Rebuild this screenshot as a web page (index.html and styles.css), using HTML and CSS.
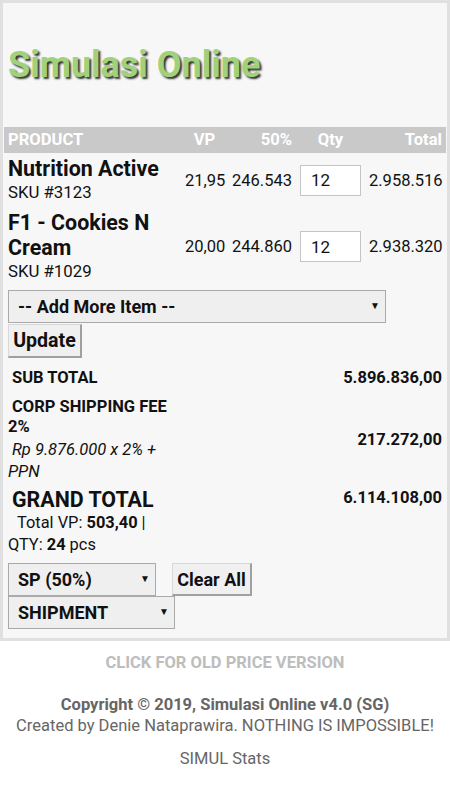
FILE: index.html
```html
<!DOCTYPE html>
<html>
<head>
<meta charset="utf-8">
<link rel="stylesheet" href="styles.css">
</head>
<body>
<div class="panel">
  <div class="head"><h1 class="title">Simulasi Online</h1></div>
  <table class="items">
    <colgroup><col class="c-prod"><col class="c-vp"><col class="c-disc"><col class="c-qty"><col class="c-total"></colgroup>
    <thead>
      <tr><th class="l">PRODUCT</th><th class="c">VP</th><th class="r">50%</th><th class="c">Qty</th><th class="r">Total</th></tr>
    </thead>
    <tbody>
      <tr>
        <td class="prod"><div class="pname">Nutrition Active</div><div class="sku">SKU #3123</div></td>
        <td class="num">21,95</td><td class="num">246.543</td>
        <td class="qty"><input class="qin" type="text" value="12"></td>
        <td class="num">2.958.516</td>
      </tr>
      <tr>
        <td class="prod"><div class="pname">F1 - Cookies N Cream</div><div class="sku">SKU #1029</div></td>
        <td class="num">20,00</td><td class="num">244.860</td>
        <td class="qty"><input class="qin" type="text" value="12"></td>
        <td class="num">2.938.320</td>
      </tr>
    </tbody>
  </table>
  <div class="controls">
    <span class="sel sel-add"><select><option>-- Add More Item --</option></select></span>
    <button class="btn btn-update">Update</button>
  </div>
  <table class="totals">
    <colgroup><col class="t-label"><col></colgroup>
    <tr>
      <td class="lbl"><div class="b ind">SUB TOTAL</div></td>
      <td class="val">5.896.836,00</td>
    </tr>
    <tr>
      <td class="lbl"><div class="b ind lh20">CORP SHIPPING FEE 2%</div><div class="it ind">Rp 9.876.000 x 2% + PPN</div></td>
      <td class="val mid">217.272,00</td>
    </tr>
    <tr>
      <td class="lbl gt"><div class="grand ind">GRAND TOTAL</div><div class="sum">Total VP: <b>503,40</b> |</div><div class="sum2">QTY: <b>24</b> pcs</div></td>
      <td class="val top">6.114.108,00</td>
    </tr>
  </table>
  <div class="bottom">
    <div class="brow">
      <span class="sel sel-sp"><select><option>SP (50%)</option></select></span>
      <button class="btn">Clear All</button>
    </div>
    <span class="sel sel-ship"><select><option>SHIPMENT</option></select></span>
  </div>
</div>
<div class="footer">
  <div class="old">CLICK FOR OLD PRICE VERSION</div>
  <div class="copy">Copyright © 2019, Simulasi Online v4.0 (SG)</div>
  <div class="created">Created by Denie Nataprawira. NOTHING IS IMPOSSIBLE!</div>
  <div class="stats">SIMUL Stats</div>
</div>
</body>
</html>
```
FILE: styles.css
```css
* { box-sizing: border-box; }
html, body { margin: 0; padding: 0; background: #fff; }
body { font-family: Roboto, "Liberation Sans", sans-serif; color: #111; width: 450px; }

.panel {
  border: 3px solid #e0e0e0;
  background: #f7f7f7;
  padding-bottom: 9px;
}
.head { height: 124px; padding: 42px 5px 0; }
.title {
  margin: 0;
  font-size: 36px;
  line-height: 40px;
  font-weight: 700;
  color: #a0d27c;
  text-shadow: 2px 2px 2px rgba(30,30,30,0.9);
}

.items {
  width: 442px;
  margin: 0 1px;
  border-collapse: collapse;
  table-layout: fixed;
}
.c-prod { width: 177px; }
.c-vp { width: 47px; }
.c-disc { width: 68px; }
.c-qty { width: 69px; }
.c-total { width: 81px; }
.items th {
  background: #c9c9c9;
  color: #fff;
  font-size: 16.6px;
  font-weight: 700;
  line-height: 18px;
  padding: 4px 4px 4px;
  height: 26px;
}
.l { text-align: left; }
.c { text-align: center; }
.r { text-align: right; }
.items td { padding: 3px 4px; vertical-align: middle; }
.pname { font-size: 21.4px; font-weight: 700; line-height: 25px; }
.sku { font-size: 16.8px; line-height: 23px; }
.num { text-align: right; font-size: 16.5px; white-space: nowrap; }
.qty { text-align: left; }
.qin {
  width: 61px; height: 31px;
  border: 1px solid #c4c4c4;
  background: #fff;
  font-family: inherit;
  font-size: 17px;
  padding: 0 10px;
  color: #111;
  display: block;
}

.controls { padding: 4px 5px 0; }
.sel { position: relative; display: block; }
.sel select {
  appearance: none;
  -webkit-appearance: none;
  width: 100%;
  height: 33px;
  background: #efefef;
  border: 1px solid #aaa;
  border-radius: 0;
  font-family: inherit;
  font-size: 18px;
  font-weight: 700;
  color: #111;
  padding: 0 0 0 9px;
  display: block;
}
.sel::after {
  content: "▼";
  position: absolute;
  right: 6px;
  top: 10px;
  font-size: 10px;
  line-height: 12px;
  color: #111;
  pointer-events: none;
}
.sel-add { width: 378px; }
.btn {
  display: block;
  font-family: inherit;
  font-size: 18px;
  font-weight: 700;
  color: #111;
  background: #f0f0f0;
  border-style: solid;
  border-width: 1px 2px 2px 1px;
  border-color: #d8d8d8 #a0a0a0 #a0a0a0 #d8d8d8;
  padding: 0 4px;
  height: 34px;
  margin: 1px 0 0;
}
.btn-update { width: 74px; font-size: 19.6px; padding: 0; }

.totals {
  width: 442px;
  margin: 5px 1px 0;
  border-collapse: collapse;
  table-layout: fixed;
}
.t-label { width: 176px; }
.totals td { padding: 4px 4px; font-size: 16.5px; line-height: 22px; }
.lbl { vertical-align: top; }
.b { font-weight: 700; }
.ind { text-indent: 4px; }
.lh20 { line-height: 20px; }
.it { font-style: italic; margin-top: 2px; }
.val { text-align: right; font-weight: 700; white-space: nowrap; }
.val.mid { vertical-align: middle; }
.val.top { vertical-align: top; padding-top: 0; }
.totals td.gt { padding-top: 1px; }
.grand { font-size: 21.4px; font-weight: 700; line-height: 24px; }
.sum { font-size: 16.4px; line-height: 22px; text-indent: 9px; }
.sum2 { font-size: 16.4px; line-height: 22px; }

.bottom { padding: 3px 5px 0; }
.brow { display: flex; align-items: flex-start; gap: 16px; }
.sel-sp { width: 148px; }
.sel-ship { width: 167px; }
.brow .btn { width: 80px; height: 33px; margin: 0; padding: 0; }

.footer { text-align: center; color: #666; font-size: 16.5px; line-height: 21px; padding-top: 11px; }
.old { color: #bdbdbd; font-weight: 700; margin-bottom: 21px; }
.copy { font-weight: 700; }
.stats { margin-top: 12px; }
```
